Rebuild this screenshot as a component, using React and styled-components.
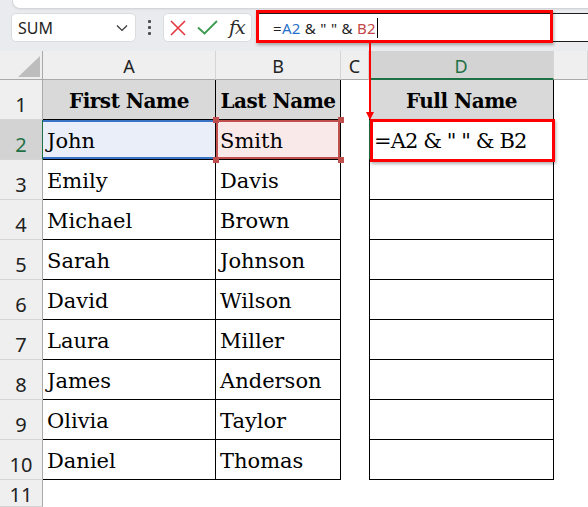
import React from "react";
import styled, { createGlobalStyle, css } from "styled-components";

const GlobalStyle = createGlobalStyle`
  html, body {
    margin: 0;
    padding: 0;
    background: #fff;
  }
  body {
    font-family: "Noto Sans", "Liberation Sans", sans-serif;
  }
`;

const Page = styled.div`
  position: relative;
  width: 588px;
  height: 507px;
  overflow: hidden;
  background: #fff;
`;

const Toolbar = styled.div`
  height: 51px;
  background: #e9ebee;
  display: flex;
  flex-direction: column;
`;

const RibbonEdge = styled.div`
  height: 8px;
  margin-left: 12px;
  background: #fff;
  border-left: 1px solid #d3d5d8;
  border-bottom: 1px solid #d3d5d8;
  border-bottom-left-radius: 8px;
  box-shadow: 0 1px 2px rgba(0, 0, 0, 0.05);
`;

const FormulaRow = styled.div`
  display: flex;
  align-items: center;
  height: 29px;
  margin-top: 4px;
  padding-left: 11px;
`;

const NameBox = styled.div`
  box-sizing: border-box;
  width: 125px;
  height: 29px;
  display: flex;
  align-items: center;
  justify-content: space-between;
  padding: 0 7px 0 6px;
  background: #fff;
  border: 1px solid #dadcdf;
  border-radius: 5px;
  font-size: 16px;
  color: #1f1f1f;
`;

const Grip = styled.div`
  width: 27px;
  display: flex;
  flex-direction: column;
  align-items: center;
  gap: 3px;
`;

const GripDot = styled.span`
  width: 3px;
  height: 3px;
  border-radius: 1px;
  background: #4d4d4d;
`;

const ButtonGroup = styled.div`
  box-sizing: border-box;
  width: 89px;
  height: 29px;
  display: flex;
  align-items: center;
  gap: 11px;
  padding-left: 6px;
  background: #fff;
  border: 1px solid #dadcdf;
  border-radius: 5px;
`;

const Fx = styled.span`
  font-family: "DejaVu Serif", "Liberation Serif", serif;
  font-style: italic;
  font-size: 19px;
  color: #2b2b2b;
  letter-spacing: -1px;
  line-height: 1;
`;

const FormulaInput = styled.div`
  position: relative;
  box-sizing: border-box;
  flex: 1;
  height: 29px;
  margin-left: 4px;
  display: flex;
  align-items: center;
  padding-left: 16px;
  background: #fff;
  border: 1px solid #1c1c1c;
  border-right: none;
  border-radius: 4px 0 0 4px;
  font-size: 15px;
  letter-spacing: 0.3px;
  color: #222;
  white-space: pre;
`;

const Ref = styled.span`
  color: ${(p) => p.$color};
`;

const Caret = styled.span`
  width: 1px;
  height: 20px;
  margin-left: 1px;
  background: #000;
`;

const Callout = styled.div`
  position: absolute;
  z-index: 3;
  box-sizing: border-box;
  border: 3px solid #ff0000;
  box-shadow: 1px 2px 3px rgba(0, 0, 0, 0.3);
  pointer-events: none;
  ${(p) =>
    p.$variant === "formula"
      ? css`
          left: -1px;
          top: -4px;
          bottom: -2px;
          width: 297px;
        `
      : css`
          left: 0;
          top: -1px;
          right: -2px;
          bottom: -3px;
        `}
`;

const Sheet = styled.div`
  display: grid;
  grid-template-columns: 43px 173px 125px 28px 185px 34px;
  grid-template-rows: 29px repeat(10, 40px) 27px;
`;

const Corner = styled.div`
  box-sizing: border-box;
  display: flex;
  align-items: flex-end;
  justify-content: flex-end;
  padding: 0 2px 2px 0;
  background: #efefef;
  border-right: 1px solid #a9a9a9;
  border-bottom: 1px solid #a9a9a9;
`;

const CornerMark = styled.div`
  width: 22px;
  height: 21px;
  background: #bdbdbd;
  clip-path: polygon(100% 0, 100% 100%, 0 100%);
`;

const ColHead = styled.div`
  box-sizing: border-box;
  display: flex;
  align-items: center;
  justify-content: center;
  padding-top: 2px;
  font-size: 18px;
  color: ${(p) => (p.$active ? "#1e7145" : "#222")};
  background: ${(p) => (p.$active ? "#d3d3d3" : "#efefef")};
  border-right: 1px solid #d5d5d5;
  border-bottom: ${(p) => (p.$active ? "2px solid #1e7145" : "1px solid #a9a9a9")};
`;

const RowHead = styled.div`
  box-sizing: border-box;
  display: flex;
  align-items: flex-start;
  justify-content: center;
  padding-top: ${(p) => (p.$tail ? "5px" : "15px")};
  font-size: 20px;
  line-height: 20px;
  color: ${(p) => (p.$active ? "#1e7145" : "#222")};
  background: ${(p) => (p.$active ? "#d3d3d3" : "#efefef")};
  border-bottom: 1px solid #d5d5d5;
  border-right: 1px solid ${(p) => (p.$active ? "#1e7145" : "#a9a9a9")};
`;

const refStyles = {
  blue: css`
    background: #e9eef8;
    box-shadow: inset 0 2px #3a73c4, inset 0 -2px #3a73c4;
  `,
  red: css`
    background: #f9e9e9;
    box-shadow: inset 0 0 0 2px #c0504d;
  `,
};

const Cell = styled.div`
  position: relative;
  box-sizing: border-box;
  display: flex;
  align-items: flex-end;
  justify-content: ${(p) => (p.$head ? "center" : "flex-start")};
  padding: 0 4px 6px;
  font-family: "DejaVu Serif", "Liberation Serif", serif;
  font-size: ${(p) => (p.$head ? "20px" : "21px")};
  line-height: 24px;
  font-weight: ${(p) => (p.$head ? 700 : 400)};
  letter-spacing: ${(p) => (p.$head ? "-0.5px" : p.$tight ? "-0.9px" : "0")};
  color: #000;
  white-space: pre;
  background: ${(p) => (p.$head ? "#d9d9d9" : "#fff")};
  ${(p) =>
    p.$boxed &&
    css`
      border-right: 1px solid #000;
      border-bottom: 1px solid #000;
    `}
  ${(p) =>
    p.$leftEdge &&
    css`
      border-left: 1px solid ${p.$active ? "#1e7145" : "#000"};
    `}
  ${(p) => p.$ref && refStyles[p.$ref]}
`;

const Handle = styled.span`
  position: absolute;
  z-index: 2;
  width: 6px;
  height: 6px;
  background: #c0504d;
  ${(p) => (p.$v === "top" ? "top: -3px;" : "bottom: -4px;")}
  ${(p) => (p.$h === "left" ? "left: -3px;" : "right: -4px;")}
`;

const ArrowLayer = styled.svg`
  position: absolute;
  left: 365px;
  top: 43px;
  z-index: 4;
`;

const people = [
  ["John", "Smith"],
  ["Emily", "Davis"],
  ["Michael", "Brown"],
  ["Sarah", "Johnson"],
  ["David", "Wilson"],
  ["Laura", "Miller"],
  ["James", "Anderson"],
  ["Olivia", "Taylor"],
  ["Daniel", "Thomas"],
];

function Formula() {
  return (
    <>
      =<Ref $color="#2a72c9">A2</Ref> &amp; " " &amp; <Ref $color="#c34646">B2</Ref>
    </>
  );
}

function RefHandles() {
  return (
    <>
      <Handle $v="top" $h="left" />
      <Handle $v="top" $h="right" />
      <Handle $v="bottom" $h="left" />
      <Handle $v="bottom" $h="right" />
    </>
  );
}

export default function App() {
  return (
    <Page>
      <GlobalStyle />
      <Toolbar>
        <RibbonEdge />
        <FormulaRow>
          <NameBox>
            SUM
            <svg width="12" height="8" viewBox="0 0 12 8">
              <polyline points="1,1.5 6,6.5 11,1.5" fill="none" stroke="#333" strokeWidth="1.2" />
            </svg>
          </NameBox>
          <Grip>
            <GripDot />
            <GripDot />
            <GripDot />
          </Grip>
          <ButtonGroup>
            <svg width="16" height="16" viewBox="0 0 16 16">
              <path d="M1 1 L15 15 M15 1 L1 15" stroke="#e5393f" strokeWidth="1.6" fill="none" />
            </svg>
            <svg width="21" height="15" viewBox="0 0 21 15">
              <polyline points="1,7.5 7.5,13.5 20,1" fill="none" stroke="#3c9a4f" strokeWidth="1.8" />
            </svg>
            <Fx>fx</Fx>
          </ButtonGroup>
          <FormulaInput>
            <Formula />
            <Caret />
            <Callout $variant="formula" />
          </FormulaInput>
        </FormulaRow>
      </Toolbar>

      <Sheet>
        <Corner>
          <CornerMark />
        </Corner>
        <ColHead>A</ColHead>
        <ColHead>B</ColHead>
        <ColHead>C</ColHead>
        <ColHead $active>D</ColHead>
        <ColHead />

        <RowHead>1</RowHead>
        <Cell $head $boxed>First Name</Cell>
        <Cell $head $boxed>Last Name</Cell>
        <Cell />
        <Cell $head $boxed $leftEdge>Full Name</Cell>
        <Cell />

        {people.map(([first, last], i) => {
          const row = i + 2;
          const isActive = row === 2;
          return (
            <React.Fragment key={row}>
              <RowHead $active={isActive}>{row}</RowHead>
              <Cell $boxed $ref={isActive ? "blue" : undefined}>{first}</Cell>
              <Cell $boxed $ref={isActive ? "red" : undefined}>
                {last}
                {isActive && <RefHandles />}
              </Cell>
              <Cell />
              <Cell $boxed $leftEdge $active={isActive} $tight={isActive}>
                {isActive && (
                  <>
                    =A2 &amp; " " &amp; B2
                    <Callout />
                  </>
                )}
              </Cell>
              <Cell />
            </React.Fragment>
          );
        })}

        <RowHead $tail>11</RowHead>
        <Cell />
        <Cell />
        <Cell />
        <Cell />
        <Cell />
      </Sheet>

      <ArrowLayer width="10" height="78" viewBox="0 0 10 78">
        <line x1="5" y1="0" x2="5" y2="70" stroke="#ff0000" strokeWidth="2" />
        <polygon points="1,69 9,69 5,77" fill="#ff0000" />
      </ArrowLayer>
    </Page>
  );
}
